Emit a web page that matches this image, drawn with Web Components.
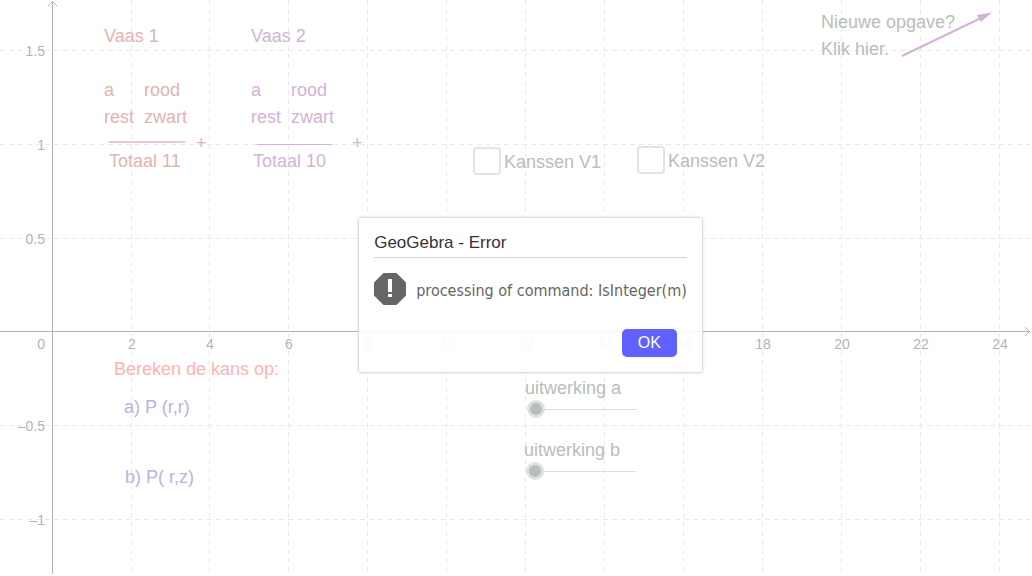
<!DOCTYPE html>
<html lang="nl">
<head>
<meta charset="utf-8">
<meta name="viewport" content="width=device-width, initial-scale=1">
<title>Vaas 1 en Vaas 2</title>
<style>
  html, body { margin: 0; height: 100%; background: #fff; overflow: hidden; }
  body { box-sizing: border-box; padding: 0 2px 2px 0; font-family: "Liberation Sans", Arial, sans-serif; }
</style>
</head>
<body>
<graph-view>
  <graph-item x="104" y="23"><vaas-contents name="Vaas 1" style="color:#e1b3b3"></vaas-contents></graph-item>
  <graph-item x="109" y="148" style="color:#e1b3b3">Totaal 11</graph-item>
  <graph-item x="196" y="130" style="color:#e1b3b3">+</graph-item>

  <graph-item x="251" y="23"><vaas-contents name="Vaas 2" style="color:#d2b3d7"></vaas-contents></graph-item>
  <graph-item x="253" y="148" style="color:#d2b3d7">Totaal 10</graph-item>
  <graph-item x="352" y="130" style="color:#d2b3d7">+</graph-item>

  <graph-item x="473" y="147"><graph-check label="Kanssen V1"></graph-check></graph-item>
  <graph-item x="637" y="146"><graph-check label="Kanssen V2"></graph-check></graph-item>

  <graph-item x="821" y="9">Nieuwe opgave?<br>Klik hier.</graph-item>

  <graph-item x="114" y="356" style="color:#ffb3b3">Bereken de kans op:</graph-item>
  <graph-item x="124" y="394" style="color:#b8b3e1">a) P (r,r)</graph-item>
  <graph-item x="125" y="464" style="color:#b8b3e1">b) P( r,z)</graph-item>

  <graph-item x="525" y="375"><graph-slider label="uitwerking a"></graph-slider></graph-item>
  <graph-item x="524" y="437"><graph-slider label="uitwerking b"></graph-slider></graph-item>

  <error-dialog slot="dialog" heading="GeoGebra - Error">processing of command: IsInteger(m)</error-dialog>
</graph-view>

<script>
const define = (name, html, setup) => customElements.define(name, class extends HTMLElement {
  connectedCallback() {
    if (this.shadowRoot) return;
    const template = document.createElement('template');
    template.innerHTML = html;
    this.attachShadow({ mode: 'open' }).append(template.content.cloneNode(true));
    if (setup) setup(this, this.shadowRoot);
  }
});

define('graph-view', `
  <style>
    :host { display: block; position: relative; height: 100%; overflow: hidden; color: #b9bdbc; }
    svg { display: block; width: 100%; height: 100%; }
    .grid { stroke: #e9e9e9; stroke-dasharray: 5 4; }
    .axis { stroke: #b3b3b3; fill: none; }
    text { font: 14px "Liberation Sans", Arial, sans-serif; fill: #b3b3b3; stroke: #fff; stroke-width: 2px; paint-order: stroke; }
    .overlay { position: absolute; inset: 0; display: grid; place-items: center; padding: 16px 0 0 31px; pointer-events: none; }
  </style>
  <svg aria-hidden="true">
    <g id="lines" shape-rendering="crispEdges"></g>
    <path class="axis" d="M48 6L52.500 1.500L57 6"/>
    <svg x="100%" overflow="visible"><path class="axis" d="M-5 327L-0.500 331.500L-5 336"/></svg>
    <g id="labels"></g>
    <path d="M109 142H185" stroke="#ebcaca" stroke-width="2"/>
    <path d="M257 144.500H332" stroke="#d2b3d7"/>
    <path d="M902 56L981 18" stroke="#d2b3d7" stroke-width="2"/>
    <path d="M992 12.500L977 15L981 22Z" fill="#d2b3d7"/>
  </svg>
  <slot></slot>
  <div class="overlay"><slot name="dialog"></slot></div>`,
  (host, root) => {
    const lines = [], labels = [];
    const col = k => Math.floor(52.15 + 78.91 * k) + 0.5;
    const row = k => Math.floor(331.9 - 93.8 * k) + 0.5;
    for (let k = 1; k <= 12; k++) {
      lines.push(`<line class="grid" x1="${col(k)}" x2="${col(k)}" y1="0" y2="100%"/>`);
      labels.push(`<text x="${col(k) + 0.5}" y="349" text-anchor="middle">${2 * k}</text>`);
    }
    for (const k of [3, 2, 1, -1, -2]) {
      lines.push(`<line class="grid" x1="0" x2="100%" y1="${row(k)}" y2="${row(k)}"/>`);
      labels.push(`<text x="45" y="${row(k) + 5}" text-anchor="end">${String(k / 2).replace('-', '–')}</text>`);
    }
    labels.push('<text x="45" y="349" text-anchor="end">0</text>');
    lines.push('<line class="axis" x1="52.500" x2="52.500" y1="2" y2="100%"/>');
    lines.push('<line class="axis" x1="0" x2="100%" y1="331.500" y2="331.500"/>');
    root.getElementById('lines').innerHTML = lines.join('');
    root.getElementById('labels').innerHTML = labels.join('');
  });

define('graph-item', `
  <style>
    :host { display: block; position: absolute; font-size: 18px; line-height: 27px; white-space: nowrap; }
  </style>
  <slot></slot>`,
  host => {
    host.style.left = host.getAttribute('x') + 'px';
    host.style.top = host.getAttribute('y') + 'px';
  });

define('vaas-contents', `
  <style>
    :host { display: grid; gap: 27px; }
    .rows { display: grid; grid-template-columns: 40px auto; }
  </style>
  <div id="name"></div>
  <div class="rows"><span>a</span><span>rood</span><span>rest</span><span>zwart</span></div>`,
  (host, root) => { root.getElementById('name').textContent = host.getAttribute('name'); });

define('graph-check', `
  <style>
    :host { display: block; }
    label { display: flex; align-items: start; gap: 3px; }
    input { appearance: none; box-sizing: border-box; width: 28px; height: 28px; margin: 0; border: 2px solid #e3e3e3; border-radius: 4px; background: #fff; }
    input:checked { background: #b9bdbc; }
    span { line-height: 30px; }
  </style>
  <label><input type="checkbox"><span id="text"></span></label>`,
  (host, root) => { root.getElementById('text').textContent = host.getAttribute('label'); });

define('graph-slider', `
  <style>
    :host { display: block; }
    label { display: grid; justify-items: start; }
    input { appearance: none; width: 110px; height: 18px; margin: -2px 0 0 2px; background: linear-gradient(#dcdedd, #dcdedd) center / 100% 1px no-repeat; }
    input::-webkit-slider-thumb { appearance: none; box-sizing: border-box; width: 18px; height: 18px; border: 3px solid #dfe1e0; border-radius: 50%; background: #b9bdbc; }
  </style>
  <label><span id="text"></span><input type="range" min="0" max="1" step="1" value="0"></label>`,
  (host, root) => { root.getElementById('text').textContent = host.getAttribute('label'); });

define('error-dialog', `
  <style>
    :host { display: block; pointer-events: auto; }
    section { box-sizing: border-box; padding: 11px 15px 15px; border: 1px solid #dedede; border-radius: 3px; background: rgba(255, 255, 255, .9); box-shadow: 0 0 3px rgba(0, 0, 0, .15); }
    h1 { margin: 0; border-bottom: 1px solid #d3d3d3; font-size: 17px; font-weight: 400; line-height: 28px; color: #333; }
    .message { display: flex; align-items: start; gap: 10px; margin: 15px 0 21px; font: 16px/35px "DejaVu Sans Condensed", "DejaVu Sans", sans-serif; font-stretch: condensed; color: #666; }
    svg { display: block; width: 32px; height: 32px; }
    .actions { display: flex; justify-content: flex-end; padding-right: 10px; }
    button { width: 55px; height: 28px; padding: 0; border: 0; border-radius: 5px; background: #6161ff; color: #fff; font: 16px/28px "Liberation Sans", Arial, sans-serif; }
  </style>
  <section role="alertdialog" aria-labelledby="heading">
    <h1 id="heading"></h1>
    <div class="message">
      <svg viewBox="0 0 32 32" aria-hidden="true"><path fill="#666" d="M9.500 0h13L32 9.500v13L22.500 32h-13L0 22.500v-13z"/><path fill="#fff" d="M14 6h4v13h-4zM14 21h4v3h-4z"/></svg>
      <slot></slot>
    </div>
    <div class="actions"><button type="button">OK</button></div>
  </section>`,
  (host, root) => {
    root.getElementById('heading').textContent = host.getAttribute('heading');
    root.querySelector('button').addEventListener('click', () => host.remove());
  });
</script>
</body>
</html>
